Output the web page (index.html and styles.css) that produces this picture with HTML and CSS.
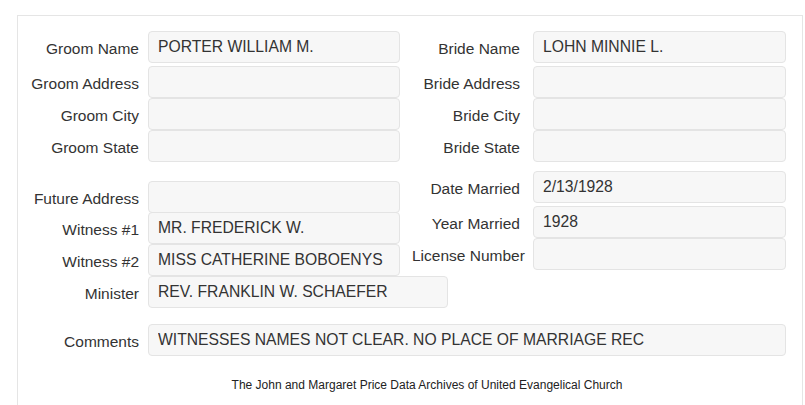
FILE: index.html
```html
<!DOCTYPE html>
<html lang="en">
<head>
  <meta charset="UTF-8" />
  <meta name="viewport" content="width=device-width, initial-scale=1.0" />
  <title>Marriage Record</title>
  <link rel="stylesheet" href="styles.css">
</head>
<body>
  <div class="card">
    <div class="section top">
      <div class="col left">
        <div class="row first"><label>Groom Name</label><input class="field" readonly value="PORTER WILLIAM M." /></div>
        <div class="row"><label>Groom Address</label><input class="field" readonly value="" /></div>
        <div class="row"><label>Groom City</label><input class="field" readonly value="" /></div>
        <div class="row"><label>Groom State</label><input class="field" readonly value="" /></div>
      </div>
      <div class="col right">
        <div class="row first"><label>Bride Name</label><input class="field" readonly value="LOHN MINNIE L." /></div>
        <div class="row"><label>Bride Address</label><input class="field" readonly value="" /></div>
        <div class="row"><label>Bride City</label><input class="field" readonly value="" /></div>
        <div class="row"><label>Bride State</label><input class="field" readonly value="" /></div>
      </div>
    </div>

    <div class="section lower">
      <div class="col left shifted">
        <div class="row tight"><label>Future Address</label><input class="field" readonly value="" /></div>
        <div class="row"><label>Witness #1</label><input class="field" readonly value="MR. FREDERICK W." /></div>
        <div class="row"><label>Witness #2</label><input class="field" readonly value="MISS CATHERINE BOBOENYS" /></div>
        <div class="row wide"><label>Minister</label><input class="field" readonly value="REV. FRANKLIN W. SCHAEFER" /></div>
      </div>
      <div class="col right">
        <div class="row first"><label>Date Married</label><input class="field" readonly value="2/13/1928" /></div>
        <div class="row"><label>Year Married</label><input class="field" readonly value="1928" /></div>
        <div class="row"><label>License Number</label><input class="field" readonly value="" /></div>
      </div>
    </div>

    <div class="row comments">
      <label>Comments</label>
      <input class="field" readonly value="WITNESSES NAMES NOT CLEAR. NO PLACE OF MARRIAGE REC" />
    </div>

    <p class="footer">The John and Margaret Price Data Archives of United Evangelical Church</p>
  </div>
</body>
</html>
```

FILE: styles.css
```css
body {
  margin: 0;
  background: #fff;
  color: #333;
  font-family: "Liberation Sans", Arial, sans-serif;
  font-size: 15.5px;
}

.card {
  margin: 15px 2px 0 17px;
  border: 1px solid #e5e5e5;
  border-bottom: none;
  padding: 15px 16px 20px 0;
  height: 400px;
  box-sizing: border-box;
}

.section {
  display: flex;
}

.lower {
  margin-top: 9px;
}

.col {
  display: flex;
  flex-direction: column;
}

.left {
  width: 382px;
}

.right {
  padding-left: 12px;
}

.row {
  display: grid;
  grid-template-columns: 121px 252px;
  column-gap: 9px;
  align-items: center;
}

.right .row {
  grid-template-columns: 108px 253px;
  column-gap: 13px;
}

.row.first {
  margin-bottom: 3px;
}

.shifted {
  padding-top: 10px;
}

.row.tight {
  margin-bottom: -1px;
}

.row.wide {
  grid-template-columns: 121px 300px;
}

label {
  text-align: right;
  white-space: nowrap;
  padding-top: 3px;
}

.field {
  height: 32px;
  box-sizing: border-box;
  width: 100%;
  margin: 0;
  border: 1px solid #e4e4e4;
  border-radius: 4px;
  background: #f7f7f7;
  padding: 0 9px;
  font-family: inherit;
  font-size: 15.7px;
  color: #333;
  outline: none;
}

.row.comments {
  margin-top: 16px;
  grid-template-columns: 121px 638px;
}

.footer {
  margin: 22px 0 0;
  padding-left: 50px;
  text-align: center;
  font-size: 12px;
  color: #222;
}
```
